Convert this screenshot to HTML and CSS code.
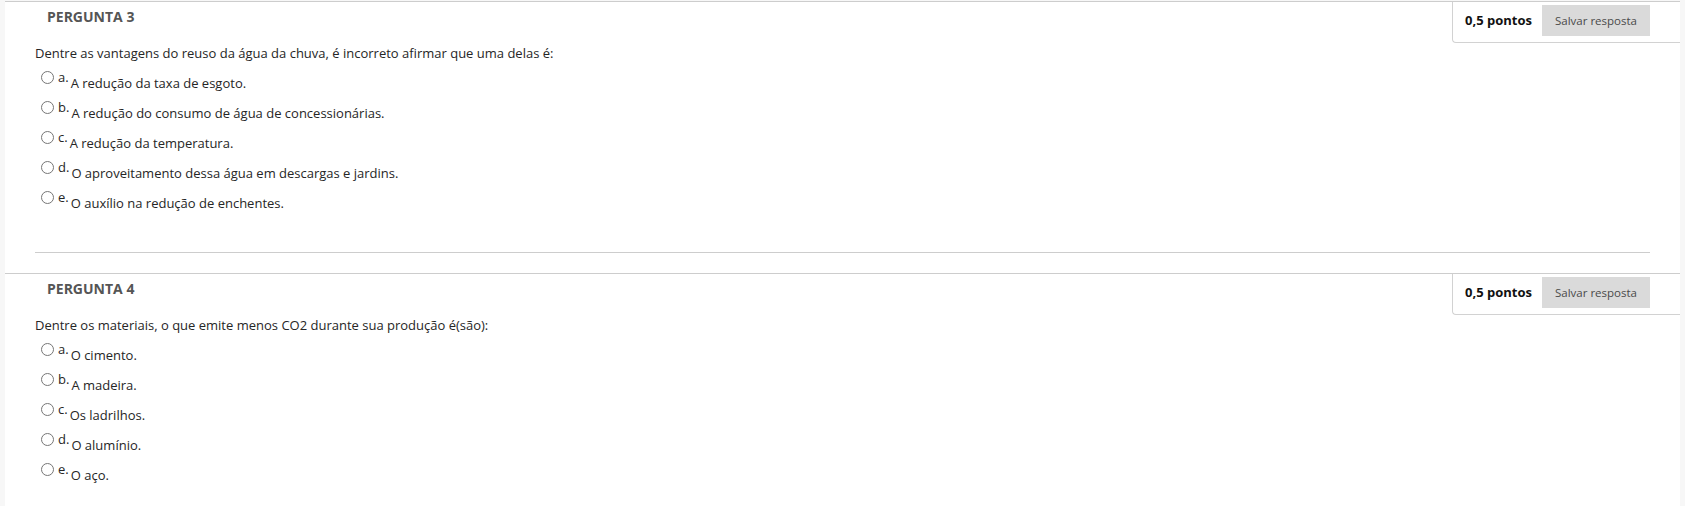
FILE: index.html
```html
<!DOCTYPE html>
<html lang="pt-BR">
<head>
    <meta charset="UTF-8">
    <title>Teste</title>
    <link rel="stylesheet" href="styles.css">
</head>
<body>
    <div class="test-area">
        <div class="question">
            <div class="question-head">
                <h3 class="question-title">PERGUNTA 3</h3>
                <div class="points-box">
                    <span class="points">0,5 pontos</span>
                    <button class="save-button" type="button">Salvar resposta</button>
                </div>
            </div>
            <div class="question-body">
                <p class="question-text">Dentre as vantagens do reuso da água da chuva, é incorreto afirmar que uma delas é:</p>
                <ul class="options">
                    <li class="option"><input type="radio" name="q3"><span class="option-letter">a.</span><span class="option-text">A redução da taxa de esgoto.</span></li>
                    <li class="option"><input type="radio" name="q3"><span class="option-letter">b.</span><span class="option-text">A redução do consumo de água de concessionárias.</span></li>
                    <li class="option"><input type="radio" name="q3"><span class="option-letter">c.</span><span class="option-text">A redução da temperatura.</span></li>
                    <li class="option"><input type="radio" name="q3"><span class="option-letter">d.</span><span class="option-text">O aproveitamento dessa água em descargas e jardins.</span></li>
                    <li class="option"><input type="radio" name="q3"><span class="option-letter">e.</span><span class="option-text">O auxílio na redução de enchentes.</span></li>
                </ul>
            </div>
            <hr class="separator">
        </div>

        <div class="question">
            <div class="question-head">
                <h3 class="question-title">PERGUNTA 4</h3>
                <div class="points-box">
                    <span class="points">0,5 pontos</span>
                    <button class="save-button" type="button">Salvar resposta</button>
                </div>
            </div>
            <div class="question-body">
                <p class="question-text">Dentre os materiais, o que emite menos CO2 durante sua produção é(são):</p>
                <ul class="options">
                    <li class="option"><input type="radio" name="q4"><span class="option-letter">a.</span><span class="option-text">O cimento.</span></li>
                    <li class="option"><input type="radio" name="q4"><span class="option-letter">b.</span><span class="option-text">A madeira.</span></li>
                    <li class="option"><input type="radio" name="q4"><span class="option-letter">c.</span><span class="option-text">Os ladrilhos.</span></li>
                    <li class="option"><input type="radio" name="q4"><span class="option-letter">d.</span><span class="option-text">O alumínio.</span></li>
                    <li class="option"><input type="radio" name="q4"><span class="option-letter">e.</span><span class="option-text">O aço.</span></li>
                </ul>
            </div>
        </div>
    </div>
</body>
</html>
```

FILE: styles.css
```css
* {
    margin: 0;
    padding: 0;
    box-sizing: border-box;
}

body {
    background-color: #f7f7f7;
    font-family: 'Open Sans', 'Liberation Sans', sans-serif;
    color: #262626;
    font-size: 13px;
    padding-top: 1px;
}

.test-area {
    margin: 0 5px;
    background-color: #ffffff;
    min-height: 505px;
}

.question {
    border-top: 1px solid #cdcdcd;
}

.question-head {
    display: flex;
    justify-content: space-between;
    align-items: flex-start;
}

.question-title {
    font-size: 14px;
    font-weight: 700;
    color: #555555;
    line-height: 18px;
    margin: 6px 0 0 42px;
}

.points-box {
    display: flex;
    align-items: flex-start;
    height: 41px;
    padding: 3px 30px 0 12px;
    border-left: 1px solid #d2d2d2;
    border-bottom: 1px solid #d2d2d2;
    border-bottom-left-radius: 4px;
}

.points {
    font-weight: 700;
    font-size: 13px;
    color: #111111;
    line-height: 31px;
}

.save-button {
    margin-left: 10px;
    width: 108px;
    height: 31px;
    border: none;
    background-color: #dadada;
    color: #4a4a4a;
    font-family: inherit;
    font-size: 11.5px;
}

.question-body {
    padding: 1px 0 0 30px;
}

.question-text {
    line-height: 18px;
}

.options {
    list-style: none;
    margin-top: 8px;
}

.option {
    display: flex;
    align-items: flex-start;
    height: 30px;
}

.option input {
    width: 13px;
    height: 13px;
    margin: 1px 4px 0 6px;
}

.option-letter {
    line-height: 14px;
    margin-right: 2px;
}

.option-text {
    line-height: 17px;
    margin-top: 5px;
}

.separator {
    border: none;
    border-top: 1px solid #cdcdcd;
    margin: 32px 30px 20px 30px;
}
```
